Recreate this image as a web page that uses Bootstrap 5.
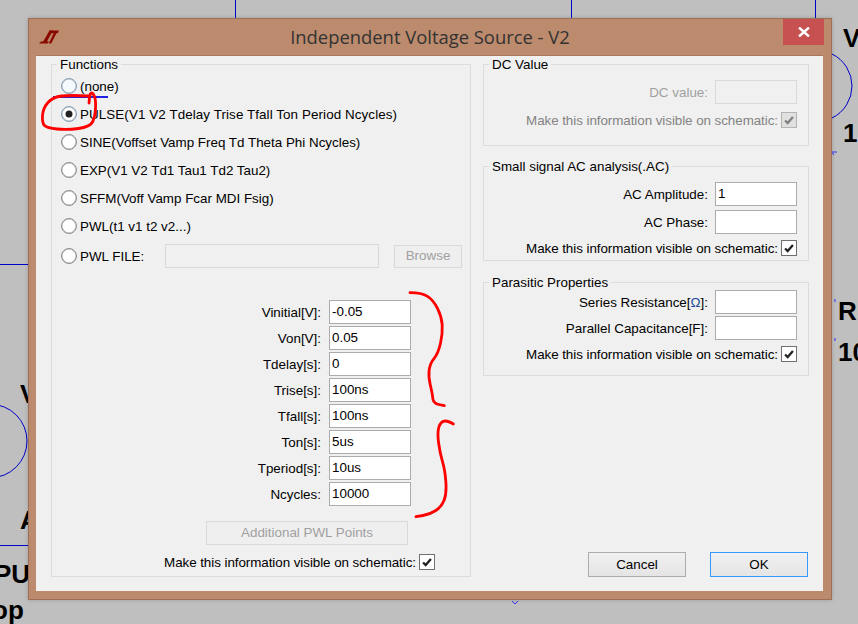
<!DOCTYPE html>
<html>
<head>
  <meta charset="utf-8">
  <meta name="viewport" content="width=device-width, initial-scale=1">
  <title>Independent Voltage Source - V2</title>
  <link href="https://cdn.jsdelivr.net/npm/bootstrap@5.3.3/dist/css/bootstrap.min.css" rel="stylesheet">
  <style>
    body { margin: 0; width: 858px; height: 624px; overflow: hidden; background: #bfbfbf; position: relative;
      font-family: "Liberation Sans", Arial, sans-serif; font-size: 13.4px; line-height: 16px; color: #000; }
    .schem-text { position: absolute; font-weight: 700; font-size: 26px; line-height: 30px; color: #000; }
    .schem-lines { position: absolute; left: 0; top: 0; }
    .ink-lines { position: absolute; left: 0; top: 0; pointer-events: none; }
    .dlg-window { position: absolute; left: 28px; top: 18px; width: 804px; height: 582px; background: #bc8a6c;
      border: 1px solid #9c7058; display: flex; flex-direction: column; box-shadow: 0 0 4px rgba(0,0,0,.2); }
    .dlg-title { height: 36px; flex: none; position: relative; text-align: center; color: #333;
      font-family: "Open Sans", sans-serif; font-size: 18.4px; line-height: 35px; }
    .dlg-logo { position: absolute; left: 10px; top: 11px; }
    .dlg-close { position: absolute; right: 7px; top: 0; width: 41px; height: 26px; background: #c75050; }
    .dlg-client { flex: 1; margin: 0 8px 8px 7px; background: #f0f0f0; border-top: 1px solid #a57a60; padding: 0 14px 14px 15px; display: flex; gap: 12px; }
    fieldset.grp-box { border: 1px solid #dcdcdc; padding: 0; margin: 0; }
    fieldset.grp-box legend { float: none; width: auto; height: 16px; font-size: 13.4px; line-height: 18px; margin: 0 0 0 5px; padding: 0 3px; }
    .grp-left { width: 420px; height: 521px; flex: none; }
    .grp-right-col { width: 326px; flex: none; display: flex; flex-direction: column; }
    .radio-row { height: 24px; padding-left: 9px; margin-bottom: 4px; display: flex; align-items: center; gap: 3px; }
    .radio-row > span { padding-top: 1px; }
    .radio-first { margin-top: 2px; }
    .radio-file { margin-top: 6px; margin-bottom: 0; }
    .wide-text { letter-spacing: .09px; }
    .file-label { width: 82px; flex: none; }
    .form-check-input.win-radio { width: 16px; height: 16px; margin: 0; flex: none; border: 1px solid #8a8a8a; background-color: #fff; box-shadow: inset 0 0 0 .5px #b5b5b5; }
    .form-check-input.win-radio:checked { background-color: #fff; border-color: #7f9db9;
      background-image: url("data:image/svg+xml,%3csvg xmlns='http://www.w3.org/2000/svg' viewBox='0 0 16 16'%3e%3ccircle cx='8' cy='8' r='4' fill='%23222'/%3e%3c/svg%3e"); }
    .form-check-input.win-radio.is-hover { border-color: #7f9db9; background: #f5fafe; }
    .form-check-input.win-check { width: 16px; height: 16px; margin: 0; flex: none; border: 1px solid #707070; border-radius: 0; background-color: #fff; }
    .form-check-input.win-check:checked { background-color: #fff; border-color: #707070; opacity: 1;
      background-image: url("data:image/svg+xml,%3csvg xmlns='http://www.w3.org/2000/svg' viewBox='0 0 16 16'%3e%3cpath d='M3.5 8.5 L6.5 11.5 L12.5 4.5' fill='none' stroke='%23222' stroke-width='2.6'/%3e%3c/svg%3e"); }
    .form-check-input.win-check:checked:disabled { background-color: #e0e0e0; border-color: #b4b4b4; opacity: 1;
      background-image: url("data:image/svg+xml,%3csvg xmlns='http://www.w3.org/2000/svg' viewBox='0 0 16 16'%3e%3cpath d='M3.5 8.5 L6.5 11.5 L12.5 4.5' fill='none' stroke='%23808080' stroke-width='2.6'/%3e%3c/svg%3e"); }
    .win-input { width: 82px; height: 24px; flex: none; border: 1px solid #ababab; background: #fff; padding: 0 2px 2px 2px; font-size: 13.4px; line-height: 16px; color: #000; border-radius: 0; outline: 0; }
    .win-input:disabled { background: #f0f0f0; border-color: #d9d9d9; }
    .win-input.file-path { width: 214px; }
    .win-btn { border: 1px solid #acacac; border-radius: 0; background: linear-gradient(#f0f0f0, #e5e5e5); padding: 0; font-size: 13.4px; line-height: 16px; color: #000; }
    .win-btn:disabled { border-color: #d9d9d9; background: #efefef; color: #a0a0a0; opacity: 1; }
    .win-browse { width: 68px; height: 23px; margin-left: 12px; }
    .win-pwl { width: 202px; height: 24px; margin: 15px 62px 0 auto; display: block; }
    .win-action { width: 98px; height: 25px; }
    .win-default { border-color: #3399ff; }
    .field-row { display: flex; justify-content: flex-end; align-items: center; gap: 8px; height: 24px; }
    .field-row > span { padding-top: 1px; }
    .grp-fields .field-row { gap: 7px; }
    .field-next { margin-top: 2px; }
    .field-list { margin: 32px 59px 0 0; display: flex; flex-direction: column; gap: 2px; }
    .show-row { display: flex; justify-content: flex-end; align-items: center; gap: 3px; height: 16px; }
    .show-row > span { letter-spacing: -.06px; padding-top: 1px; }
    .show-left { margin: 9px 35px 0 0; }
    .show-group { margin-top: 6px; }
    fieldset.grp-box.grp-fields { padding-right: 11px; }
    fieldset.grp-box.grp-dc { height: 90px; margin-bottom: 12px; }
    fieldset.grp-box.grp-ac { height: 103px; margin-bottom: 13px; }
    fieldset.grp-box.grp-par { height: 102px; }
    .txt-off { color: #a0a0a0; }
    .txt-mid { color: #838383; }
    .omega { color: #1c4f9c; }
    .dlg-actions { margin-top: auto; margin-right: 1px; display: flex; justify-content: flex-end; gap: 24px; }
  </style>
</head>
<body>
  <svg class="schem-lines" width="858" height="624" viewBox="0 0 858 624">
    <g fill="none" stroke="#0000c8" stroke-width="1">
      <path d="M235.500 0V18M571.500 0V18M815.500 0V18M0 264.500H28M0 545.500H28"/>
      <path d="M832 54 A 35.600 35.600 0 0 1 832 118"/>
      <circle cx="-9.800" cy="441" r="36.800"/>
      <path d="M834 155l-2 -2.500M832 152h5M512 601l3 3l3 -3M835 299v3M835 338v3" stroke="#3030ff"/>
    </g>
  </svg>
  <span class="schem-text" style="left:843px;top:23px">V</span>
  <span class="schem-text" style="left:843px;top:118px">1</span>
  <span class="schem-text" style="left:838px;top:296px">R</span>
  <span class="schem-text" style="left:838px;top:337px">10</span>
  <span class="schem-text" style="left:20px;top:379px">V</span>
  <span class="schem-text" style="left:20px;top:505px">A</span>
  <span class="schem-text" style="left:-6px;top:559px">PUL</span>
  <span class="schem-text" style="left:-8px;top:595px">op</span>

  <div class="dlg-window">
    <div class="dlg-title">
      <svg class="dlg-logo" width="20" height="14" viewBox="0 0 20 14">
        <path d="M10.500 .5H14L8 11.500H10L8.800 13.500H0L2 11.500H4.200Z" fill="#8b0a00"/>
        <path d="M10.500 .5H20L18.800 3.200H17.500L12.200 13.500H9.800L14.600 3.200H11.500Z" fill="#8b0a00"/>
      </svg>
      Independent Voltage Source - V2
      <div class="dlg-close d-flex align-items-center justify-content-center">
        <svg width="12" height="10" viewBox="0 0 12 10"><path d="M1 .5L11 9.500M11 .5L1 9.500" stroke="#fff" stroke-width="2.400"/></svg>
      </div>
    </div>
    <div class="dlg-client">
      <fieldset class="grp-box grp-left">
        <legend>Functions</legend>
        <div class="radio-row radio-first"><input class="form-check-input win-radio is-hover" type="radio" name="fn"><span>(none)</span></div>
        <div class="radio-row wide-text"><input class="form-check-input win-radio" type="radio" name="fn" checked><span>PULSE(V1 V2 Tdelay Trise Tfall Ton Period Ncycles)</span></div>
        <div class="radio-row"><input class="form-check-input win-radio" type="radio" name="fn"><span>SINE(Voffset Vamp Freq Td Theta Phi Ncycles)</span></div>
        <div class="radio-row"><input class="form-check-input win-radio" type="radio" name="fn"><span>EXP(V1 V2 Td1 Tau1 Td2 Tau2)</span></div>
        <div class="radio-row"><input class="form-check-input win-radio" type="radio" name="fn"><span>SFFM(Voff Vamp Fcar MDI Fsig)</span></div>
        <div class="radio-row"><input class="form-check-input win-radio" type="radio" name="fn"><span>PWL(t1 v1 t2 v2...)</span></div>
        <div class="radio-row radio-file"><input class="form-check-input win-radio" type="radio" name="fn"><span class="file-label">PWL FILE:</span>
          <input class="win-input file-path" type="text" disabled>
          <button class="win-btn win-browse" type="button" disabled>Browse</button>
        </div>
        <div class="field-list">
          <div class="field-row"><span>Vinitial[V]:</span><input class="win-input" type="text" value="-0.05"></div>
          <div class="field-row"><span>Von[V]:</span><input class="win-input" type="text" value="0.05"></div>
          <div class="field-row"><span>Tdelay[s]:</span><input class="win-input" type="text" value="0"></div>
          <div class="field-row"><span>Trise[s]:</span><input class="win-input" type="text" value="100ns"></div>
          <div class="field-row"><span>Tfall[s]:</span><input class="win-input" type="text" value="100ns"></div>
          <div class="field-row"><span>Ton[s]:</span><input class="win-input" type="text" value="5us"></div>
          <div class="field-row"><span>Tperiod[s]:</span><input class="win-input" type="text" value="10us"></div>
          <div class="field-row"><span>Ncycles:</span><input class="win-input" type="text" value="10000"></div>
        </div>
        <button class="win-btn win-pwl" type="button" disabled>Additional PWL Points</button>
        <div class="show-row show-left"><span>Make this information visible on schematic:</span><input class="form-check-input win-check" type="checkbox" checked></div>
      </fieldset>
      <div class="grp-right-col">
        <fieldset class="grp-box grp-dc grp-fields">
          <legend>DC Value</legend>
          <div class="field-row mt-2"><span class="txt-off">DC value:</span><input class="win-input" type="text" disabled></div>
          <div class="show-row mt-2"><span class="txt-mid">Make this information visible on schematic:</span><input class="form-check-input win-check" type="checkbox" checked disabled></div>
        </fieldset>
        <fieldset class="grp-box grp-ac grp-fields">
          <legend>Small signal AC analysis(.AC)</legend>
          <div class="field-row mt-2"><span>AC Amplitude:</span><input class="win-input" type="text" value="1"></div>
          <div class="field-row mt-1"><span>AC Phase:</span><input class="win-input" type="text"></div>
          <div class="show-row show-group"><span>Make this information visible on schematic:</span><input class="form-check-input win-check" type="checkbox" checked></div>
        </fieldset>
        <fieldset class="grp-box grp-par grp-fields">
          <legend>Parasitic Properties</legend>
          <div class="field-row"><span>Series Resistance[<span class="omega">Ω</span>]:</span><input class="win-input" type="text"></div>
          <div class="field-row field-next"><span>Parallel Capacitance[F]:</span><input class="win-input" type="text"></div>
          <div class="show-row show-group"><span>Make this information visible on schematic:</span><input class="form-check-input win-check" type="checkbox" checked></div>
        </fieldset>
        <div class="dlg-actions">
          <button class="win-btn win-action" type="button">Cancel</button>
          <button class="win-btn win-action win-default" type="button">OK</button>
        </div>
      </div>
    </div>
  </div>

  <svg class="ink-lines" width="858" height="624" viewBox="0 0 858 624">
    <path d="M53 97H108" fill="none" stroke="#2020e0" stroke-width="2"/>
    <g fill="none" stroke="#f00" stroke-width="2.800" stroke-linecap="round" stroke-linejoin="round">
      <path class="ink-stroke" data-pts="90,96 70,95 53,97 43,108 42,123 47,128 67,130 90,127 95,117 96,100 93,93 90,93 89,103"/>
      <path class="ink-stroke" data-pts="410,292.700 421.700,292.700 433.300,300 441.700,316.700 442.700,333.300 438.300,353.300 430,363.300 428.300,376.700 432.300,393.300 433.300,403.300 444.300,405.700"/>
      <path class="ink-stroke" data-pts="453.300,424 446.700,420 440,422.700 437.300,433.300 440,453.300 445,470 446.700,493.300 441.700,506.700 430,514.300 416,516.700"/>
    </g>
  </svg>

  <script src="https://cdn.jsdelivr.net/npm/bootstrap@5.3.3/dist/js/bootstrap.bundle.min.js"></script>
  <script>
    // smooth the hand drawn marks through their midpoints
    document.querySelectorAll('.ink-stroke').forEach(stroke => {
      const pts = stroke.dataset.pts.split(' ').map(p => p.split(',').map(Number));
      let d = 'M' + pts[0].join(' ');
      for (let i = 1; i < pts.length - 1; i++) {
        const mx = (pts[i][0] + pts[i + 1][0]) / 2;
        const my = (pts[i][1] + pts[i + 1][1]) / 2;
        d += ' Q' + pts[i].join(' ') + ' ' + mx + ' ' + my;
      }
      d += ' L' + pts[pts.length - 1].join(' ');
      stroke.setAttribute('d', d);
    });
  </script>
</body>
</html>
